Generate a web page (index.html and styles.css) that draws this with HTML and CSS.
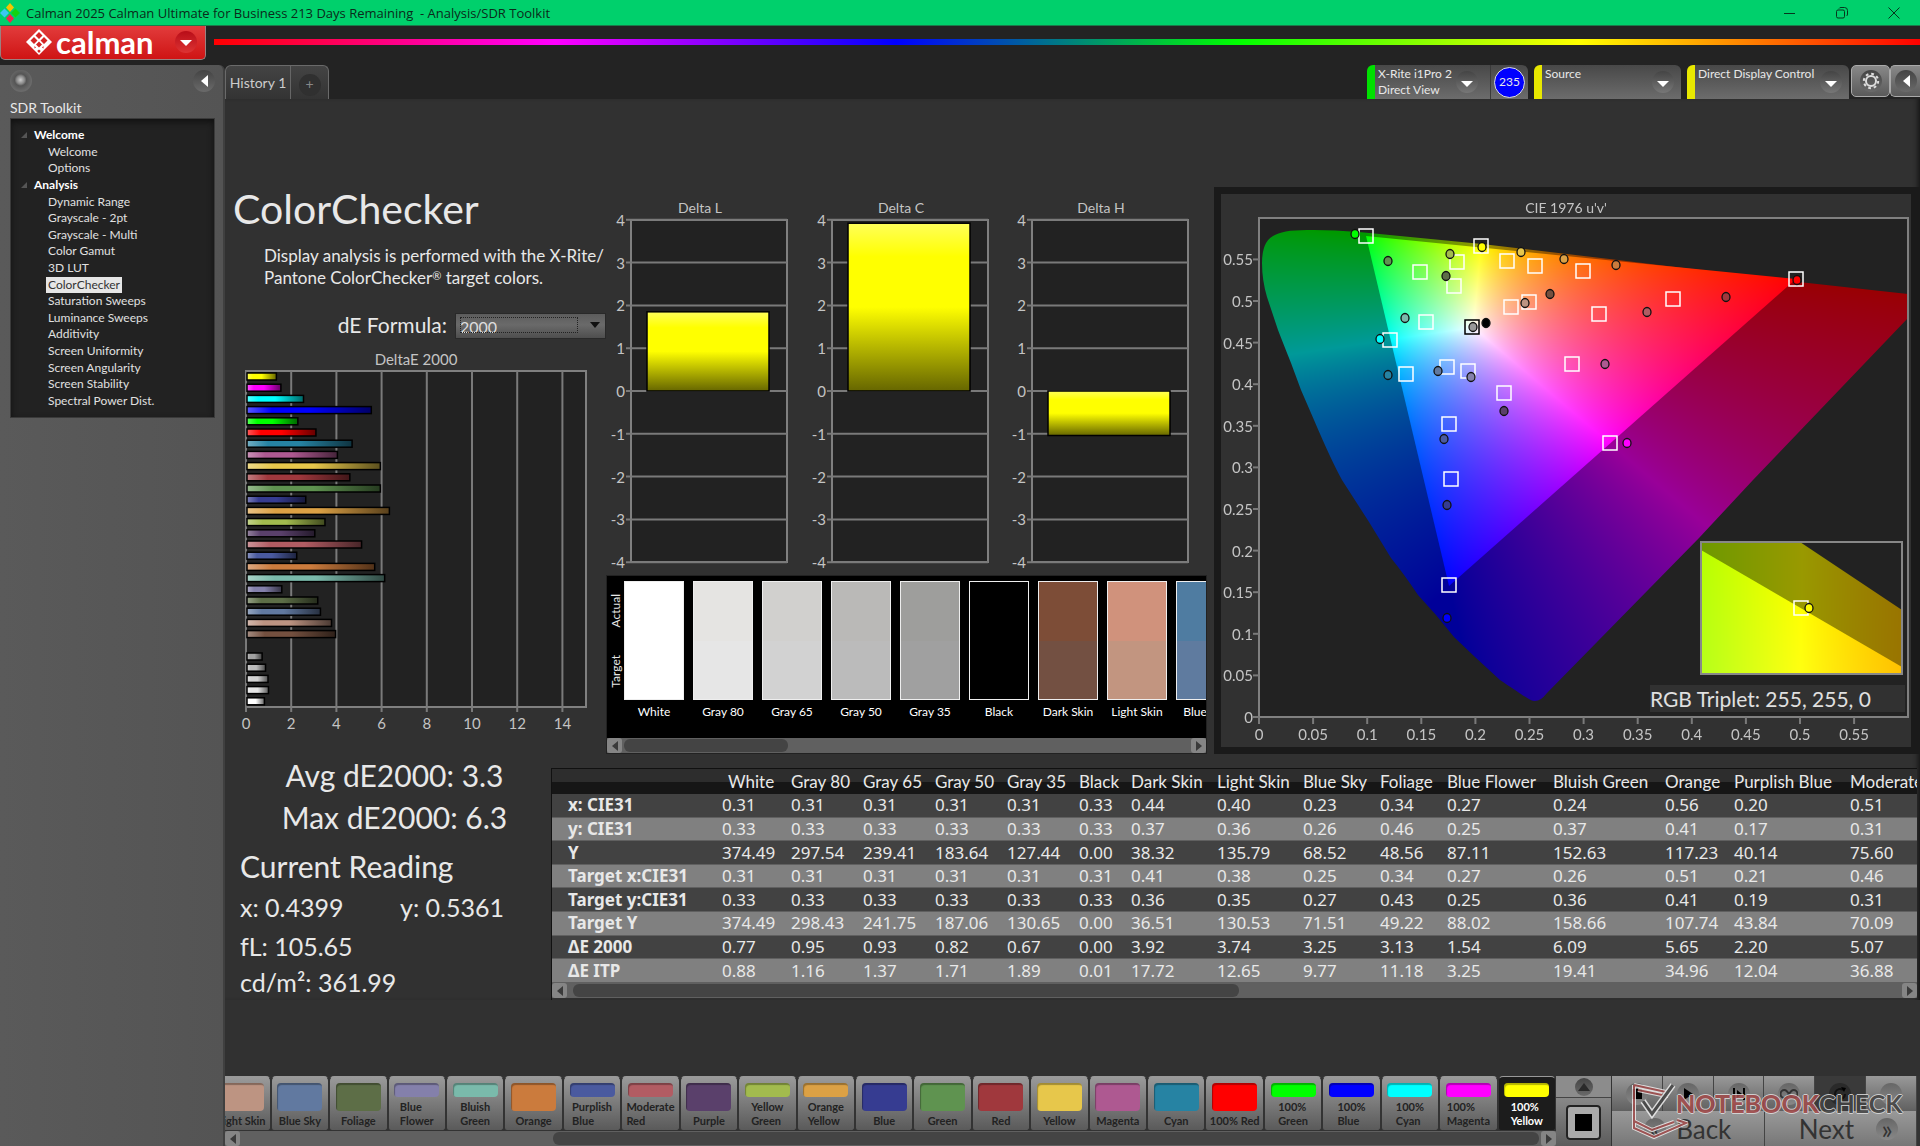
FILE: index.html
```html
<!DOCTYPE html>
<html lang="en">
<head>
    <meta charset="UTF-8">
    <meta name="viewport" content="width=device-width, initial-scale=1.0">
    <title>Calman 2025 - Analysis/SDR Toolkit</title>
    <link rel="stylesheet" href="styles.css">
</head>
<body>
    <header class="titlebar">
        <svg class="app-icon" width="20" height="20" viewBox="0 0 20 20">
            <path d="M10 0l4 4.500-4 4.500-4-4.500z" fill="#f5c400"/>
            <path d="M4.500 5.500l4.500 4.500-4.500 4.500L0 10z" fill="#3cc8f0"/>
            <path d="M15.500 5.500L20 10l-4.500 4.500L11 10z" fill="#12d312"/>
            <path d="M10 11l4 4.500-4 4.500-4-4.500z" fill="#f0264d"/>
        </svg>
        <span class="app-title">Calman 2025 Calman Ultimate for Business 213 Days Remaining &nbsp;- Analysis/SDR Toolkit</span>
        <div class="window-buttons">
            <button aria-label="Minimize"><svg width="12" height="12" viewBox="0 0 12 12"><path d="M0 6.500h11"/></svg></button>
            <button aria-label="Restore"><svg width="12" height="12" viewBox="0 0 12 12"><rect x="0.500" y="3" width="8" height="8" rx="1.500"/><path d="M3 1.500q.5-1 2-1h3.500q3 0 3 3V7q0 1.500-1 2"/></svg></button>
            <button aria-label="Close"><svg width="12" height="12" viewBox="0 0 12 12"><path d="M0.500 0.500l11 11M11.500 0.500l-11 11"/></svg></button>
        </div>
    </header>

    <div class="brandbar">
        <button class="brand">
            <svg width="28" height="28" viewBox="0 0 28 28">
                <path d="M14 1L27 14 14 27 1 14z" fill="#fff"/>
                <path d="M14 4l3.500 3.500L14 11l-3.500-3.500zM9 9l3.500 3.500L9 16l-3.500-3.500zM19 9l3.500 3.500L19 16l-3.500-3.500zM14 13.500l3 3-3 3-3-3zM9.500 18l1.500 1.500-1.500 1zM18.500 18l-1.500 1.500 1.500 1zM14 21.500l1.800 1.500L14 25l-1.800-2z" fill="#d42525"/>
            </svg>
            <span class="brand-name">calman</span>
            <span class="drop dark-red"></span>
        </button>
        <div class="rainbow"></div>
    </div>

    <div class="shell">
        <aside class="sidebar">
            <div class="sidebar-top">
                <span class="knob"></span>
                <button class="round-btn" aria-label="Collapse sidebar"><svg width="8" height="12" viewBox="0 0 8 12"><path d="M8 0v12L1 6z" fill="#fff"/></svg></button>
            </div>
            <h2>SDR Toolkit</h2>
            <ul class="tree">
                <li class="group">Welcome</li>
                <li><a href="#">Welcome</a></li>
                <li><a href="#">Options</a></li>
                <li class="group">Analysis</li>
                <li><a href="#">Dynamic Range</a></li>
                <li><a href="#">Grayscale - 2pt</a></li>
                <li><a href="#">Grayscale - Multi</a></li>
                <li><a href="#">Color Gamut</a></li>
                <li><a href="#">3D LUT</a></li>
                <li><a href="#" class="active">ColorChecker</a></li>
                <li><a href="#">Saturation Sweeps</a></li>
                <li><a href="#">Luminance Sweeps</a></li>
                <li><a href="#">Additivity</a></li>
                <li><a href="#">Screen Uniformity</a></li>
                <li><a href="#">Screen Angularity</a></li>
                <li><a href="#">Screen Stability</a></li>
                <li><a href="#">Spectral Power Dist.</a></li>
            </ul>
        </aside>

        <main>
            <div class="tabbar">
                <div class="tabs">
                    <button class="tab">History 1</button>
                    <button class="tab-add" aria-label="Add history"><span>+</span></button>
                </div>
                <div class="devices">
                    <div class="device meter">
                        <button class="device-main"><span>X-Rite i1Pro 2<br>Direct View</span><span class="drop"></span></button>
                        <span class="level">235</span>
                    </div>
                    <div class="device source">
                        <button class="device-main"><span>Source</span><span class="drop"></span></button>
                    </div>
                    <div class="device display">
                        <button class="device-main"><span>Direct Display Control</span><span class="drop"></span></button>
                    </div>
                    <button class="square-btn" aria-label="Settings"><span class="round-btn"><svg width="18" height="18" viewBox="0 0 18 18" fill="none" stroke="#ddd"><circle cx="9" cy="9" r="5" stroke-width="2"/><circle cx="9" cy="9" r="7.200" stroke-width="2" stroke-dasharray="2.800 2.850"/></svg></span></button>
                    <button class="square-btn last" aria-label="Collapse panel"><span class="round-btn"><svg width="8" height="12" viewBox="0 0 8 12"><path d="M8 0v12L1 6z" fill="#fff"/></svg></span></button>
                </div>
            </div>

            <div class="workspace">
                <section class="upper">
                    <div class="intro">
                        <h1>ColorChecker</h1>
                        <p>Display analysis is performed with the X-Rite/<br>Pantone ColorChecker<sup>&reg;</sup> target colors.</p>
                        <div class="formula">
                            <label for="formula">dE Formula:</label>
                            <span class="select-wrap">
                                <select id="formula"><option>2000</option></select>
                            </span>
                        </div>
                        <svg id="deltaE" viewBox="0 0 381 390"></svg>
                    </div>

                    <div class="middle">
                        <svg id="deltas" viewBox="0 0 608 388"></svg>
                        <div class="patch-box">
                            <div class="patches">
                                <div class="patch-side"><span>Actual</span><span>Target</span></div>
                                <div class="patch-list" id="patches"></div>
                            </div>
                            <div class="scrollbar patch-scroll">
                                <button class="sb-left" aria-label="Scroll left"></button>
                                <div class="track"><div class="thumb"></div></div>
                                <button class="sb-right" aria-label="Scroll right"></button>
                            </div>
                        </div>
                    </div>

                    <div class="cie">
                        <canvas id="cieFill" width="690" height="553"></canvas>
                        <svg id="cieChart" viewBox="0 0 690 553"></svg>
                    </div>
                </section>

                <section class="lower">
                    <div class="stats">
                        <div class="summary">
                            <div>Avg dE2000: 3.3</div>
                            <div>Max dE2000: 6.3</div>
                        </div>
                        <h3>Current Reading</h3>
                        <div class="reading xy"><span>x: 0.4399</span><span>y: 0.5361</span></div>
                        <div class="reading">fL: 105.65</div>
                        <div class="reading">cd/m²: 361.99</div>
                    </div>

                    <div class="grid-box">
                        <div class="grid-clip">
                        <table>
                            <colgroup>
                                <col class="c-label"><col class="c-white"><col class="c-gray"><col class="c-gray"><col class="c-gray"><col class="c-gray"><col class="c-black"><col class="c-skin"><col class="c-skin"><col class="c-sky"><col class="c-foliage"><col class="c-flower"><col class="c-bluish"><col class="c-orange"><col class="c-purplish"><col class="c-moderate">
                            </colgroup>
                            <thead>
                                <tr><th></th><th>White</th><th>Gray 80</th><th>Gray 65</th><th>Gray 50</th><th>Gray 35</th><th>Black</th><th>Dark Skin</th><th>Light Skin</th><th>Blue Sky</th><th>Foliage</th><th>Blue Flower</th><th>Bluish Green</th><th>Orange</th><th>Purplish Blue</th><th>Moderate Red</th></tr>
                            </thead>
                            <tbody>
                                <tr><th>x: CIE31</th><td>0.31</td><td>0.31</td><td>0.31</td><td>0.31</td><td>0.31</td><td>0.33</td><td>0.44</td><td>0.40</td><td>0.23</td><td>0.34</td><td>0.27</td><td>0.24</td><td>0.56</td><td>0.20</td><td>0.51</td></tr>
                                <tr><th>y: CIE31</th><td>0.33</td><td>0.33</td><td>0.33</td><td>0.33</td><td>0.33</td><td>0.33</td><td>0.37</td><td>0.36</td><td>0.26</td><td>0.46</td><td>0.25</td><td>0.37</td><td>0.41</td><td>0.17</td><td>0.31</td></tr>
                                <tr><th>Y</th><td>374.49</td><td>297.54</td><td>239.41</td><td>183.64</td><td>127.44</td><td>0.00</td><td>38.32</td><td>135.79</td><td>68.52</td><td>48.56</td><td>87.11</td><td>152.63</td><td>117.23</td><td>40.14</td><td>75.60</td></tr>
                                <tr><th>Target x:CIE31</th><td>0.31</td><td>0.31</td><td>0.31</td><td>0.31</td><td>0.31</td><td>0.31</td><td>0.41</td><td>0.38</td><td>0.25</td><td>0.34</td><td>0.27</td><td>0.26</td><td>0.51</td><td>0.21</td><td>0.46</td></tr>
                                <tr><th>Target y:CIE31</th><td>0.33</td><td>0.33</td><td>0.33</td><td>0.33</td><td>0.33</td><td>0.33</td><td>0.36</td><td>0.35</td><td>0.27</td><td>0.43</td><td>0.25</td><td>0.36</td><td>0.41</td><td>0.19</td><td>0.31</td></tr>
                                <tr><th>Target Y</th><td>374.49</td><td>298.43</td><td>241.75</td><td>187.06</td><td>130.65</td><td>0.00</td><td>36.51</td><td>130.53</td><td>71.51</td><td>49.22</td><td>88.02</td><td>158.66</td><td>107.74</td><td>43.84</td><td>70.09</td></tr>
                                <tr><th>ΔE 2000</th><td>0.77</td><td>0.95</td><td>0.93</td><td>0.82</td><td>0.67</td><td>0.00</td><td>3.92</td><td>3.74</td><td>3.25</td><td>3.13</td><td>1.54</td><td>6.09</td><td>5.65</td><td>2.20</td><td>5.07</td></tr>
                                <tr><th>ΔE ITP</th><td>0.88</td><td>1.16</td><td>1.37</td><td>1.71</td><td>1.89</td><td>0.01</td><td>17.72</td><td>12.65</td><td>9.77</td><td>11.18</td><td>3.25</td><td>19.41</td><td>34.96</td><td>12.04</td><td>36.88</td></tr>
                            </tbody>
                        </table>
                        </div>
                        <div class="scrollbar grid-scroll">
                            <button class="sb-left" aria-label="Scroll left"></button>
                            <div class="track"><div class="thumb"></div></div>
                            <button class="sb-right" aria-label="Scroll right"></button>
                        </div>
                    </div>
                </section>
            </div>

            <footer>
                <div class="swatch-strip">
                    <div class="swatches" id="swatches"></div>
                    <div class="scrollbar swatch-scroll">
                        <button class="sb-left" aria-label="Scroll left"></button>
                        <div class="track"><div class="thumb"></div></div>
                        <button class="sb-right" aria-label="Scroll right"></button>
                    </div>
                </div>
                <div class="pattern">
                    <button class="pattern-up" aria-label="Show patterns"><span class="round-btn"><svg width="12" height="8" viewBox="0 0 12 8"><path d="M6 0l6 8H0z" fill="#2a2a2a"/></svg></span></button>
                    <button class="pattern-window" aria-label="Pattern window"><span></span></button>
                </div>
                <div class="transport">
                    <div class="transport-row">
                        <button aria-label="Stop"><span class="round-btn"><svg width="16" height="16" viewBox="0 0 16 16"><path d="M3 3h10v10H3z"/></svg></span></button>
                        <button aria-label="Play"><span class="round-btn"><svg width="16" height="16" viewBox="0 0 16 16"><path d="M4 2l9 6-9 6z"/></svg></span></button>
                        <button aria-label="Read series"><span class="round-btn"><svg width="16" height="16" viewBox="0 0 16 16"><path d="M2 2h2v12H2zM12 2h2v12h-2zM6 4l5 4-5 4z"/></svg></span></button>
                        <button aria-label="Continuous"><span class="round-btn"><svg width="18" height="16" viewBox="0 0 18 16"><path d="M9 8C7 5 6 4 4.500 4a4 4 0 000 8C6 12 7 11 9 8s3-4 4.500-4a4 4 0 010 8C12 12 11 11 9 8z" fill="none" stroke="#333" stroke-width="2"/></svg></span></button>
                        <button class="pressed" aria-label="Refresh"><span class="round-btn"><svg width="16" height="16" viewBox="0 0 16 16"><path d="M13 8a5 5 0 11-2-4" fill="none" stroke="#111" stroke-width="2"/><path d="M9 1l5 1-2 4z"/></svg></span></button>
                        <button aria-label="Options"><span class="round-btn"></span></button>
                    </div>
                    <div class="nav-row">
                        <button><span class="round-btn">«</span>Back</button>
                        <button>Next<span class="round-btn">»</span></button>
                    </div>
                    <div class="watermark">
                        <svg width="56" height="56" viewBox="0 0 56 56" fill="none">
                            <path d="M2 2l32 7M2 2v43l20 9 32-14-9-3M6 7l24 5M2 38l18 9 22-8M34 9v6" stroke="#eee" stroke-width="4"/>
                            <path d="M2 2l32 7M2 2v43l20 9 32-14-9-3M6 7l24 5M2 38l18 9 22-8M34 9v6" stroke="#a24c4c" stroke-width="2"/>
                            <path d="M11 18l9 13L41 2" stroke="#eee" stroke-width="6"/>
                            <path d="M11 18l9 13L41 2" stroke="#444" stroke-width="3"/>
                        </svg>
                        <span><b>NOTEBOOK</b>CHECK</span>
                    </div>
                </div>
            </footer>
        </main>
    </div>
    <script src="charts.js"></script>
</body>
</html>
```

FILE: styles.css
```css
* {
    box-sizing: border-box;
}

body {
    margin: 0;
    min-height: 100vh;
    display: flex;
    flex-direction: column;
    background: #232323;
    color: #e8e8e8;
    font-family: Lato, "Liberation Sans", sans-serif;
    font-size: 14px;
    overflow-x: hidden;
}

button {
    font: inherit;
    color: inherit;
    border: none;
    padding: 0;
    background: none;
    cursor: pointer;
}

h1, h2, h3, p, ul {
    margin: 0;
    padding: 0;
    font-weight: normal;
}

/* title bar */
.titlebar {
    height: 26px;
    display: flex;
    align-items: center;
    background: #00d06c;
    border-bottom: 1px solid #1a7a4a;
    color: #0b2a1a;
    font-family: "Open Sans", "Noto Sans", sans-serif;
    font-size: 13px;
}

.app-title {
    flex: 1;
    margin-left: 6px;
}

.window-buttons {
    display: flex;
}

.window-buttons button {
    width: 52px;
    height: 24px;
    display: flex;
    align-items: center;
    justify-content: center;
}

.window-buttons svg {
    fill: none;
    stroke: #06351d;
}

/* logo row */
.brandbar {
    height: 39px;
    display: flex;
    align-items: flex-start;
    gap: 8px;
}

.brand {
    width: 206px;
    height: 34px;
    display: flex;
    align-items: center;
    padding: 0 8px 2px 24px;
    background: linear-gradient(#e23c3c, #cf1414);
    border: 1px solid #9b8080;
    border-top: none;
    border-radius: 0 0 5px 5px;
}

.brand-name {
    flex: 1;
    margin-left: 3px;
    text-align: left;
    color: #fff;
    font-size: 31px;
    font-weight: bold;
    line-height: 28px;
}

.rainbow {
    flex: 1;
    height: 6px;
    margin-top: 13px;
    background: linear-gradient(to right, #f00, #f0f, #00f, #0f0, #ff0, #f00);
}

.drop {
    flex: none;
    width: 22px;
    height: 22px;
    display: flex;
    align-items: center;
    justify-content: center;
    border-radius: 50%;
    background: linear-gradient(#444, #777);
}

.drop::after {
    content: "";
    margin-top: 3px;
    border: 6px solid transparent;
    border-top-color: #fff;
    border-bottom: none;
}

.dark-red {
    background: linear-gradient(#b80d18, #dd3333);
}

.round-btn {
    width: 22px;
    height: 22px;
    display: flex;
    align-items: center;
    justify-content: center;
    border-radius: 50%;
    background: linear-gradient(#444, #6a6a6a);
}

/* sidebar */
.shell {
    flex: 1;
    display: grid;
    grid-template-columns: 225px minmax(0, 1fr);
}

.sidebar {
    padding: 0 8px 0 10px;
    background: linear-gradient(to right, #5a5a5a, #545454);
    border-right: 2px solid #404040;
    border-radius: 0 6px 0 0;
}

.sidebar-top {
    height: 32px;
    display: flex;
    align-items: center;
    justify-content: space-between;
}

.knob {
    width: 22px;
    height: 22px;
    border-radius: 50%;
    background: radial-gradient(circle at 48% 45%, #ccc 0, #888 4px, #555 6px, #6a6a6a 11px);
}

.sidebar h2 {
    height: 21px;
    font-size: 14px;
    line-height: 22px;
}

.tree {
    height: 300px;
    padding: 8px 0;
    display: grid;
    grid-auto-rows: 1fr;
    align-items: center;
    list-style: none;
    background: #222;
    border: 1px solid #3a3a3a;
    box-shadow: inset 0 3px 6px #111;
    font-size: 12px;
    line-height: 16px;
}

.tree a {
    display: inline-block;
    margin-left: 35px;
    padding: 0 2px;
    color: #e0e0e0;
    text-decoration: none;
}

.tree a.active {
    background: #e6e6e6;
    color: #333;
}

.tree .group {
    display: flex;
    align-items: center;
    gap: 7px;
    margin-left: 10px;
    color: #fff;
    font-weight: bold;
}

.tree .group::before {
    content: "";
    border-left: 6px solid transparent;
    border-bottom: 6px solid #555;
}

/* tabs and devices */
main {
    display: flex;
    flex-direction: column;
    background: #313131;
}

.tabbar {
    height: 34px;
    display: flex;
    justify-content: space-between;
    background: #232323;
}

.tabs {
    display: flex;
    background: linear-gradient(#444, #333);
    border: 1px solid #6a6a6a;
    border-bottom: none;
    border-radius: 6px 6px 0 0;
}

.tab {
    width: 65px;
    border-right: 1px solid #666;
    color: #ccc;
    font-size: 14px;
}

.tab-add {
    width: 37px;
    display: flex;
    align-items: center;
    justify-content: center;
}

.tab-add span {
    width: 22px;
    height: 22px;
    margin-top: 4px;
    border-radius: 50%;
    background: #303030;
    color: #888;
    line-height: 20px;
}

.devices {
    display: flex;
    align-items: flex-start;
}

.device {
    height: 34px;
    margin-right: 6px;
    display: flex;
    align-items: center;
    background: linear-gradient(#484848, #6c6c6c);
    border-left: 8px solid #e8e800;
    border-radius: 6px 6px 0 0;
    font-size: 12px;
    line-height: 16px;
}

.device-main {
    flex: 1;
    height: 34px;
    padding: 1px 7px 0 3px;
    display: flex;
    justify-content: space-between;
    text-align: left;
}

.device-main .drop {
    margin-top: 5px;
}

.meter {
    width: 161px;
    border-left-color: #00e000;
}

.meter .device-main {
    padding-right: 12px;
}

.source {
    width: 147px;
}

.display {
    width: 162px;
    margin-right: 2px;
}

.level {
    width: 38px;
    height: 34px;
    display: flex;
    align-items: center;
    justify-content: center;
    border-left: 1px solid #3a3a3a;
    position: relative;
    z-index: 0;
    font-size: 12px;
}

.level::before {
    content: "";
    position: absolute;
    z-index: -1;
    width: 29px;
    height: 29px;
    border: 1px solid #ddd;
    border-radius: 50%;
    background: #00f;
}

.square-btn {
    width: 39px;
    height: 32px;
    display: flex;
    align-items: center;
    justify-content: center;
    background: linear-gradient(#888, #5a5a5a);
    border: 1px solid #aaa;
    border-radius: 5px;
}

.square-btn.last {
    width: 30px;
    border-right: none;
    border-radius: 5px 0 0 5px;
}

/* workspace */
.workspace {
    padding-top: 88px;
    box-shadow: inset -5px 0 5px -3px #151515;
}

.upper {
    display: grid;
    grid-template-columns: minmax(0, 381fr) minmax(0, 608fr) minmax(0, 706fr);
    align-items: start;
}

.intro h1 {
    padding-left: 8px;
    font-size: 41px;
    line-height: 44px;
}

.intro p {
    margin: 14px 0 0 39px;
    font-size: 17px;
    line-height: 22px;
    white-space: nowrap;
}

.intro sup {
    font-size: 11px;
    line-height: 11px;
    vertical-align: 4px;
}

.formula {
    margin-top: 23px;
    display: flex;
    align-items: center;
    justify-content: flex-end;
    gap: 8px;
    font-size: 21px;
    line-height: 26px;
}

.select-wrap {
    width: 151px;
    height: 26px;
    position: relative;
}

.select-wrap select {
    width: 100%;
    height: 26px;
    padding: 2px 0 0 4px;
    appearance: none;
    background: linear-gradient(#5c5c5c, #6a6a6a 45%, #4e4e4e);
    border: 1px solid #292929;
    border-radius: 0;
    color: #ddd;
    font-family: inherit;
    font-size: 16px;
}

.select-wrap::before {
    content: "";
    position: absolute;
    top: 5px;
    left: 5px;
    right: 28px;
    bottom: 5px;
    border: 1px dotted #222;
    pointer-events: none;
}

.select-wrap::after {
    content: "";
    position: absolute;
    top: 10px;
    right: 6px;
    border: 5px solid transparent;
    border-top: 6px solid #111;
    border-bottom: none;
}

.intro svg {
    display: block;
    width: 100%;
    margin-top: 12px;
}

svg text {
    fill: #c4c4c4;
    font-size: 15px;
}

svg .title {
    font-size: 14px;
}

.axis {
    fill: #222;
    stroke: #808080;
    stroke-width: 2px;
}

.line {
    stroke: #7a7a7a;
    stroke-width: 2px;
}

.middle svg {
    display: block;
    width: 100%;
}

.patch-box {
    margin-right: 7px;
    border: 1px solid #222;
    background: #000;
}

.patches {
    height: 162px;
    padding-top: 5px;
    display: flex;
    overflow: hidden;
}

.patch-side {
    flex: none;
    width: 17px;
    height: 120px;
    display: flex;
    flex-direction: column;
    justify-content: space-around;
    align-items: center;
    font-size: 12px;
    line-height: 14px;
}

.patch-side span {
    writing-mode: vertical-rl;
    transform: rotate(180deg);
}

.patch-list {
    display: flex;
    gap: 9px;
}

.patch {
    flex: none;
    width: 60px;
    text-align: center;
    color: #fff;
    font-size: 12px;
    line-height: 23px;
    white-space: nowrap;
}

.patch-color {
    height: 119px;
    border: 1px solid #eee;
}

.patch-color div {
    height: 50%;
}

/* scroll bars */
.scrollbar {
    height: 15px;
    display: grid;
    grid-template-columns: 15px 1fr 15px;
    gap: 2px;
    background: #606060;
}

.scrollbar button {
    display: flex;
    align-items: center;
    justify-content: center;
    border-radius: 3px;
    background: #858585;
}

.sb-left::after {
    content: "";
    border: 5px solid transparent;
    border-right: 6px solid #3a3a3a;
    border-left: none;
}

.sb-right::after {
    content: "";
    border: 5px solid transparent;
    border-left: 6px solid #3a3a3a;
    border-right: none;
}

.thumb {
    height: 13px;
    margin-top: 1px;
    border-radius: 6px;
    background: #444;
}

.patch-scroll .thumb {
    width: 29%;
}

.grid-scroll .thumb {
    width: 50%;
    margin-left: 4px;
}

.swatch-scroll .thumb {
    width: 76%;
    margin-left: auto;
}

/* CIE panel */
.cie {
    position: relative;
    padding: 7px 9px 7px 7px;
    background: #1a1a1a;
}

.cie canvas {
    display: block;
    width: 100%;
}

.cie svg {
    position: absolute;
    top: 7px;
    left: 7px;
    width: calc(100% - 16px);
}

.cie svg .triplet {
    fill: #e0e0e0;
    font-size: 21px;
}

/* readings and table */
.lower {
    display: grid;
    grid-template-columns: minmax(0, 326fr) minmax(0, 1369fr);
}

.stats {
    padding-left: 15px;
    white-space: nowrap;
}

.summary {
    width: 309px;
    font-size: 30px;
    line-height: 42px;
    text-align: center;
}

.stats h3 {
    margin-top: 5px;
    font-size: 30px;
    line-height: 46px;
}

.reading {
    font-size: 25px;
    line-height: 36px;
}

.reading.xy {
    width: 264px;
    margin-bottom: 3px;
    display: flex;
    justify-content: space-between;
}

.grid-box {
    margin: 14px 3px 0 0;
    border-top: 1px solid #111;
    border-left: 1px solid #111;
}

.grid-clip {
    overflow: hidden;
}

table {
    width: 1410px;
    height: 214px;
    table-layout: fixed;
    border-collapse: collapse;
    font-family: "Noto Sans", "Open Sans", sans-serif;
    font-size: 17px;
    line-height: 22px;
}

th, td {
    padding: 0;
    font-weight: normal;
    text-align: left;
    white-space: nowrap;
}

thead tr {
    background: linear-gradient(#2d2d2d 50%, #161616 50%);
}

thead th {
    height: 25px;
    font-family: Lato, sans-serif;
}

thead th:nth-child(2) {
    padding-left: 6px;
}

tbody th {
    padding-left: 16px;
    font-weight: bold;
}

tbody tr {
    background: #424242;
    border-bottom: 1px solid #606060;
}

tbody tr:nth-child(even) {
    background: #808080;
}

.c-label { width: 170px; }
.c-white { width: 69px; }
.c-gray { width: 72px; }
.c-black { width: 52px; }
.c-skin { width: 86px; }
.c-sky { width: 77px; }
.c-foliage { width: 67px; }
.c-flower { width: 106px; }
.c-bluish { width: 112px; }
.c-orange { width: 69px; }
.c-purplish { width: 116px; }
.c-moderate { width: 112px; }

/* footer */
footer {
    height: 70px;
    margin-top: auto;
    display: grid;
    grid-template-columns: minmax(0, 1fr) 55px 306px;
    padding-right: 3px;
    background: #333;
}

.swatches {
    height: 55px;
    display: flex;
    justify-content: flex-end;
    overflow: hidden;
}

.swatch {
    flex: 0 0 4.39%;
    padding: 6px 0 2px;
    display: flex;
    flex-direction: column;
    align-items: center;
    justify-content: space-between;
    background: linear-gradient(#9a9a9a, #5a5a5a);
    border: 1px solid #333;
    border-top-color: #999;
    border-radius: 5px 5px 3px 3px;
    color: #222;
    font-size: 11px;
    font-weight: bold;
    line-height: 14px;
    text-align: left;
    white-space: nowrap;
}

.swatch i {
    width: 45px;
    height: 28px;
    border-radius: 4px;
    box-shadow: inset 1px 2px 1px rgba(0, 0, 0, 0.3);
}

.swatch.two i {
    height: 14px;
}

.swatch.selected {
    background: #1c1c1c;
    color: #fff;
}

.pattern {
    display: flex;
    flex-direction: column;
}

.pattern-up {
    height: 22px;
    display: flex;
    align-items: center;
    justify-content: center;
    background: #8c8c8c;
    border-bottom: 1px solid #444;
}

.pattern .round-btn {
    width: 18px;
    height: 18px;
}

.pattern-window {
    flex: 1;
    display: flex;
    align-items: center;
    justify-content: center;
    background: linear-gradient(#888, #5c5c5c);
}

.pattern-window span {
    width: 35px;
    height: 35px;
    border: 9px solid #aaa;
    outline: 2px solid #222;
    outline-offset: -2px;
    border-radius: 4px;
    background: #000;
}

.transport {
    position: relative;
    display: grid;
    grid-template-rows: 1fr 1fr;
    border-left: 1px solid #333;
}

.transport-row {
    display: grid;
    grid-template-columns: repeat(6, 1fr);
}

.transport button {
    display: flex;
    align-items: center;
    justify-content: center;
    background: linear-gradient(#999, #606060);
    border-right: 1px solid #444;
}

.transport .round-btn {
    background: linear-gradient(#666, #888);
    color: #333;
}

.transport .pressed {
    background: #3a3a3a;
}

.transport .pressed .round-btn {
    background: #2a2a2a;
}

.nav-row {
    display: grid;
    grid-template-columns: 1fr 1fr;
}

.nav-row button {
    gap: 10px;
    background: linear-gradient(#999, #777);
    color: #333;
    font-size: 26px;
    line-height: 28px;
}

.nav-row button:last-child {
    justify-content: flex-end;
    gap: 22px;
    padding-right: 18px;
}

.nav-row .round-btn {
    line-height: 20px;
}

.watermark {
    position: absolute;
    top: 7px;
    left: 20px;
    display: flex;
    color: #444;
    font-size: 25px;
    font-weight: bold;
    line-height: 40px;
    text-shadow: 1px 0 #ddd, -1px 0 #ddd, 0 1px #ddd, 0 -1px #ddd;
    pointer-events: none;
    opacity: 0.85;
}

.watermark span {
    margin-left: -12px;
}

.watermark b {
    color: #a34a4a;
}
```

FILE: charts.js
```js
const SVG = "http://www.w3.org/2000/svg";

function add(parent, name, attrs, text) {
    const node = document.createElementNS(SVG, name);
    for (const key in attrs) node.setAttribute(key, attrs[key]);
    if (text !== undefined) node.textContent = text;
    parent.appendChild(node);
    return node;
}

function shade(hex, target, amount) {
    const n = parseInt(hex.slice(1), 16);
    const parts = [n >> 16, (n >> 8) & 255, n & 255];
    return "rgb(" + parts.map(c => Math.round(c + (target - c) * amount)).join(",") + ")";
}

function gradient(svg, id, color, vertical) {
    const g = add(svg, "linearGradient", vertical ? { id, x1: 0, y1: 0, x2: 0, y2: 1 } : { id });
    add(g, "stop", { offset: 0, "stop-color": shade(color, 255, 0.35) });
    add(g, "stop", { offset: 0.2, "stop-color": color });
    add(g, "stop", { offset: 0.5, "stop-color": color });
    add(g, "stop", { offset: 1, "stop-color": shade(color, 0, 0.6) });
}

// DeltaE 2000 horizontal bars, top to bottom
const deltaE = [
    ["#ffff00", 1.3], ["#ff00ff", 1.5], ["#00ffff", 2.5], ["#0000ff", 5.5], ["#00ff00", 2.25], ["#ff0000", 3.05],
    ["#2683a3", 4.65], ["#ae5991", 4], ["#e7c74b", 5.9], ["#a0383d", 4.55], ["#5f9350", 5.9], ["#363c91", 2.6],
    ["#dca145", 6.3], ["#a2bb4e", 3.45], ["#5a406b", 3], ["#b25c63", 5.07], ["#4a5a9f", 2.2], ["#cb7b3d", 5.65],
    ["#7abaab", 6.09], ["#8480ab", 1.54], ["#5d6e47", 3.13], ["#6179a0", 3.25], ["#bd9482", 3.74], ["#74503f", 3.92],
    ["#000000", 0], ["#a0a0a0", 0.67], ["#bbbbbb", 0.82], ["#d2d2d2", 0.93], ["#e6e6e6", 0.95], ["#ffffff", 0.77]
];

function drawDeltaE() {
    const svg = document.getElementById("deltaE");
    const left = 21, top = 21, unit = 22.6;
    add(svg, "text", { x: 191, y: 15, "text-anchor": "middle" }, "DeltaE 2000");
    add(svg, "rect", { x: left, y: top, width: 340, height: 336, class: "axis" });
    for (let v = 0; v <= 14; v += 2) {
        const x = left + v * unit;
        add(svg, "line", { x1: x, y1: top, x2: x, y2: top + 341, class: "line" });
        add(svg, "text", { x: x, y: top + 358, "text-anchor": "middle" }, v);
    }
    deltaE.forEach((row, i) => {
        if (!row[1]) return;
        gradient(svg, "bar" + i, row[0]);
        add(svg, "rect", { x: left + 1, y: top + 2 + i * 11.2, width: row[1] * unit, height: 7, fill: `url(#bar${i})`, stroke: "#000", "stroke-width": 1.5 });
    });
}

function drawDeltas() {
    const svg = document.getElementById("deltas");
    const zero = 204, unit = 42.8;
    gradient(svg, "yellow", "#ffff00", true);
    [["Delta L", 25, 1.85], ["Delta C", 226, 3.92], ["Delta H", 426, -1.04]].forEach(([title, left, value]) => {
        add(svg, "text", { x: left + 69, y: 26, "text-anchor": "middle", class: "title" }, title);
        add(svg, "rect", { x: left, y: 33, width: 156, height: 342, class: "axis" });
        for (let v = -4; v <= 4; v++) {
            const y = zero - v * unit;
            add(svg, "line", { x1: left - 5, y1: y, x2: left + 156, y2: y, class: "line" });
            add(svg, "text", { x: left - 6, y: y + 6, "text-anchor": "end" }, v);
        }
        const h = Math.abs(value) * unit;
        add(svg, "rect", { x: left + 16, y: value > 0 ? zero - h : zero, width: 122, height: h, fill: "url(#yellow)", stroke: "#000", "stroke-width": 1.5 });
    });
}

// u'v' to display colour, P3 primaries
function colorAt(u, v) {
    const X = 9 * u / (4 * v), Z = (12 - 3 * u - 20 * v) / (4 * v);
    const rgb = [
        2.4935 * X - 0.9314 - 0.4027 * Z,
        -0.8295 * X + 1.7627 + 0.0236 * Z,
        0.0358 * X - 0.0762 + 0.9569 * Z
    ].map(c => Math.max(0, c));
    const max = Math.max(...rgb) || 1;
    return rgb.map(c => 255 * Math.pow(c / max, 0.8));
}

function fillLayer(w, h, toUV, gain) {
    const layer = document.createElement("canvas");
    layer.width = w;
    layer.height = h;
    const ctx = layer.getContext("2d");
    const img = ctx.createImageData(w, h);
    for (let y = 0; y < h; y++) {
        for (let x = 0; x < w; x++) {
            const [u, v] = toUV(x, y);
            const c = colorAt(u, Math.max(v, 0.001));
            const i = (y * w + x) * 4;
            img.data[i] = c[0] * gain;
            img.data[i + 1] = c[1] * gain;
            img.data[i + 2] = c[2] * gain;
            img.data[i + 3] = 255;
        }
    }
    ctx.putImageData(img, 0, 0);
    return layer;
}

function paint(ctx, x, y, layer, path) {
    ctx.save();
    ctx.translate(x, y);
    ctx.clip(new Path2D(path));
    ctx.drawImage(layer, 0, 0);
    ctx.restore();
}

function drawCieFill() {
    const ctx = document.getElementById("cieFill").getContext("2d");
    ctx.fillStyle = "#313131";
    ctx.fillRect(0, 0, 690, 553);
    ctx.fillStyle = "#222";
    ctx.fillRect(38, 24, 649, 499);

    const uv = (x, y) => [x / 1081, (499.5 - y) / 834];
    const locus = "M275 483C270 482 262 476 241 462L216 439 195 419 177 397 159 377Q145 356 132 340L110 304 83 262Q72 242 55 202L42 172 32 145Q24 125 19 112L8 79Q3 62 3 45Q3 24 14 18Q24 11 55 12Q75 12 100 14L223 26 359 42 540 64 649 76V100L494 262 440 320 288 475Q281 484 275 483Z";
    paint(ctx, 38, 24, fillLayer(649, 499, uv, 0.6), locus);
    paint(ctx, 38, 24, fillLayer(649, 499, uv, 1), "M107 18L537 61 190 368Z");

    // magnified view around the current target
    const zoom = (x, y) => [0.2047 + (x - 100) / 3440, 0.5638 - (y - 66) / 15000];
    ctx.fillStyle = "#222";
    ctx.fillRect(480, 348, 201, 132);
    paint(ctx, 480, 348, fillLayer(201, 132, zoom, 0.6), "M0 0H99L201 68V132H0Z");
    paint(ctx, 480, 348, fillLayer(201, 132, zoom, 1), "M0 8L201 125V132H0Z");
}

const targets = [
    [107, 18], [222, 28], [248, 43], [276, 48], [324, 53], [198, 44], [161, 54], [195, 68], [537, 61],
    [414, 81], [340, 96], [270, 84], [252, 89], [167, 104], [131, 122], [147, 156], [188, 149],
    [209, 153], [245, 175], [313, 146], [190, 206], [351, 225], [192, 261], [190, 367]
];

const readings = [
    [96, 16, "#00ff00"], [191, 36, "#a2bb4e"], [223, 29, "#ffff00"], [262, 34, "#e7c74b"], [305, 41, "#dca145"],
    [357, 47, "#cb7b3d"], [129, 43, "#5f9350"], [187, 58, "#5d6e47"], [538, 62, "#ff0000"], [291, 76, "#74503f"],
    [266, 85, "#bd9482"], [467, 79, "#a0383d"], [388, 94, "#b25c63"], [227, 105, "#000000"], [214, 109, "#999999"],
    [146, 100, "#7abaab"], [121, 121, "#00ffff"], [129, 157, "#2683a3"], [179, 153, "#6179a0"], [212, 159, "#8480ab"],
    [245, 193, "#5a406b"], [346, 146, "#ae5991"], [185, 221, "#4a5a9f"], [368, 225, "#ff00ff"], [188, 287, "#363c91"],
    [188, 400, "#0000ff"]
];

function mark(svg, x, y, color) {
    add(svg, "rect", { x: x - 7, y: y - 7, width: 14, height: 14, fill: "none", stroke: color, "stroke-width": 1.5 });
}

function dot(svg, x, y, color) {
    add(svg, "ellipse", { cx: x, cy: y, rx: 4, ry: 4.5, fill: color, stroke: "#111", "stroke-width": 1.3 });
}

function drawCieChart() {
    const svg = document.getElementById("cieChart");
    add(svg, "text", { x: 345, y: 19, "text-anchor": "middle", class: "title" }, "CIE 1976 u'v'");
    const box = add(svg, "rect", { x: 38, y: 24, width: 649, height: 499, class: "axis" });
    box.style.fill = "none";
    for (let i = 0; i < 12; i++) {
        const label = +(i * 0.05).toFixed(2);
        const x = 38 + i * 54.1, y = 523 - i * 41.6;
        add(svg, "line", { x1: x, y1: 523, x2: x, y2: 530, class: "line" });
        add(svg, "text", { x: x, y: 546, "text-anchor": "middle" }, label);
        add(svg, "line", { x1: 32, y1: y, x2: 38, y2: y, class: "line" });
        add(svg, "text", { x: 32, y: y + 6, "text-anchor": "end" }, label);
    }
    const plot = add(svg, "g", { transform: "translate(38 24)" });
    mark(plot, 213, 109, "#000");
    targets.forEach(t => mark(plot, t[0], t[1], "#fff"));
    readings.forEach(r => dot(plot, r[0], r[1], r[2]));

    add(svg, "rect", { x: 480, y: 348, width: 201, height: 132, fill: "none", stroke: "#888", "stroke-width": 2 });
    mark(svg, 580, 414, "#fff");
    dot(svg, 588, 414, "#ffff00");
    add(svg, "rect", { x: 429, y: 491, width: 255, height: 27, fill: "#313131" });
    add(svg, "text", { x: 429, y: 513, class: "triplet" }, "RGB Triplet: 255, 255, 0");
}

const patches = [
    ["White", "#ffffff", "#ffffff"], ["Gray 80", "#e5e4e2", "#e6e6e6"], ["Gray 65", "#d1d0ce", "#d2d2d2"],
    ["Gray 50", "#bab9b7", "#bbbbbb"], ["Gray 35", "#9e9e9c", "#a0a0a0"], ["Black", "#000000", "#000000"],
    ["Dark Skin", "#7d4d37", "#735042"], ["Light Skin", "#d0927c", "#c29580"], ["Blue Sky", "#4f7ca1", "#5f7b9f"]
];

function drawPatches() {
    document.getElementById("patches").innerHTML = patches.map(p => `
        <div class="patch">
            <div class="patch-color">
                <div style="background:${p[1]}"></div>
                <div style="background:${p[2]}"></div>
            </div>
            ${p[0]}
        </div>`).join("");
}

const swatches = [
    ["Light Skin", "#bd9482"], ["Blue Sky", "#6179a0"], ["Foliage", "#5d6e47"], ["Blue<br>Flower", "#8480ab"],
    ["Bluish<br>Green", "#7abaab"], ["Orange", "#cb7b3d"], ["Purplish<br>Blue", "#4a5a9f"], ["Moderate<br>Red", "#b25c63"],
    ["Purple", "#5a406b"], ["Yellow<br>Green", "#a2bb4e"], ["Orange<br>Yellow", "#dca145"], ["Blue", "#363c91"],
    ["Green", "#5f9350"], ["Red", "#a0383d"], ["Yellow", "#e7c74b"], ["Magenta", "#ae5991"], ["Cyan", "#2683a3"],
    ["100% Red", "#ff0000"], ["100%<br>Green", "#00ff00"], ["100%<br>Blue", "#0000ff"], ["100%<br>Cyan", "#00ffff"],
    ["100%<br>Magenta", "#ff00ff"], ["100%<br>Yellow", "#ffff00"]
];

function drawSwatches() {
    document.getElementById("swatches").innerHTML = swatches.map((s, i) => {
        let cls = "swatch";
        if (s[0].includes("<br>")) cls += " two";
        if (i === swatches.length - 1) cls += " selected";
        return `<button class="${cls}"><i style="background:${s[1]}"></i><span>${s[0]}</span></button>`;
    }).join("");
}

drawDeltaE();
drawDeltas();
drawCieFill();
drawCieChart();
drawPatches();
drawSwatches();
```
